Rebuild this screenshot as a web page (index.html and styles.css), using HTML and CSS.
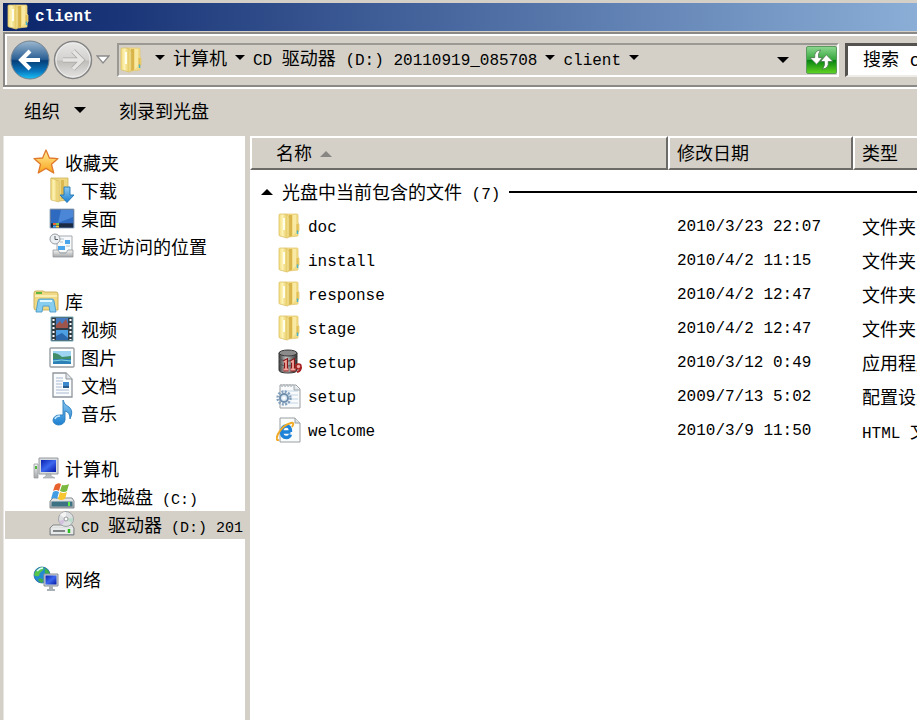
FILE: index.html
```html
<!DOCTYPE html>
<html lang="zh-CN">
<head>
    <meta charset="UTF-8">
    <meta name="viewport" content="width=device-width, initial-scale=1.0">
    <title>client</title>
    <link rel="stylesheet" href="styles.css">
</head>
<body>
    <!-- shared icons and gradients -->
    <svg class="sprite" aria-hidden="true">
        <defs>
            <linearGradient id="gFolder" x1="0" y1="0" x2="1" y2="0">
                <stop offset="0" stop-color="#f3dd7c"/>
                <stop offset=".35" stop-color="#fcf2b4"/>
                <stop offset=".75" stop-color="#e9cf6e"/>
                <stop offset="1" stop-color="#f6e79c"/>
            </linearGradient>
            <linearGradient id="gBlue" x1="0" y1="0" x2="0" y2="1">
                <stop offset="0" stop-color="#8ecbf2"/>
                <stop offset="1" stop-color="#1b7fd0"/>
            </linearGradient>
            <linearGradient id="gScreen" x1="0" y1="0" x2="1" y2="1">
                <stop offset="0" stop-color="#0a1fb0"/>
                <stop offset=".5" stop-color="#3c68ee"/>
                <stop offset="1" stop-color="#0517a6"/>
            </linearGradient>
            <linearGradient id="gStar" x1="0" y1="0" x2="0" y2="1">
                <stop offset="0" stop-color="#fff09a"/>
                <stop offset="1" stop-color="#f9a21b"/>
            </linearGradient>
            <linearGradient id="gMetal" x1="0" y1="0" x2="0" y2="1">
                <stop offset="0" stop-color="#f4f4f4"/>
                <stop offset="1" stop-color="#a4a6a8"/>
            </linearGradient>
            <linearGradient id="gBack" x1="0" y1="0" x2="0" y2="1">
                <stop offset="0" stop-color="#9db8d0"/>
                <stop offset=".48" stop-color="#2a5f94"/>
                <stop offset=".52" stop-color="#063e78"/>
                <stop offset=".8" stop-color="#0a78bf"/>
                <stop offset="1" stop-color="#19c4f8"/>
            </linearGradient>
            <linearGradient id="gForward" x1="0" y1="0" x2="0" y2="1">
                <stop offset="0" stop-color="#e8e8e7"/>
                <stop offset=".5" stop-color="#d2d1cf"/>
                <stop offset=".53" stop-color="#bfbdba"/>
                <stop offset="1" stop-color="#e6e5e3"/>
            </linearGradient>
            <linearGradient id="gDb" x1="0" y1="0" x2="1" y2="0">
                <stop offset="0" stop-color="#3e3e3e"/>
                <stop offset=".4" stop-color="#c4c4c4"/>
                <stop offset="1" stop-color="#303030"/>
            </linearGradient>
        </defs>
        <symbol id="folder" viewBox="0 0 24 26">
            <path d="M8 1h12q1 0 1 1v8l1 1v7l-1 1v4l-9 1z" fill="#f3dc86" stroke="#e3c974" stroke-width=".8"/>
            <path d="M12 2h3v21l-3 1z" fill="#d9b448"/>
            <path d="M16 2h3v17l-3 3z" fill="#f8e9a4"/>
            <path d="M19.500 11h2v8h-2z" fill="#e2bf55"/>
            <path d="M20.500 17.500v3.500" stroke="#45b3c9" stroke-width="1.500"/>
            <path d="M2 2q0-1 1-1h5q4 1 4 4v18q0 2-2 2l-7-2q-1 0-1-1z" fill="url(#gFolder)" stroke="#dcc168" stroke-width=".8"/>
            <path d="M7 5v12" stroke="#fffdec" stroke-width="2"/>
        </symbol>
        <symbol id="star" viewBox="0 0 26 26">
            <path d="M13 1l3.400 8 8.600.6-6.500 5.700 2.200 8.700-7.700-4.600L5.300 24l2.200-8.700L1 9.600 9.600 9z" fill="url(#gStar)" stroke="#e0792b" stroke-width="1.300" stroke-linejoin="round"/>
        </symbol>
        <symbol id="download" viewBox="0 0 26 26">
            <path d="M2 1h17v22l-8 1-9-2z" fill="#efd780" stroke="#cfb258" stroke-width=".8"/>
            <path d="M12 3h3v19h-3z" fill="#dcb950"/>
            <path d="M2 1l8 3v21l-8-2z" fill="url(#gFolder)" stroke="#cfb258" stroke-width=".6"/>
            <path d="M15 10h6v8h4l-7 7.500-7-7.500h4z" fill="url(#gBlue)" stroke="#2076b8" stroke-width=".9"/>
        </symbol>
        <symbol id="desktop" viewBox="0 0 26 26">
            <path d="M1 4h24v19H1z" fill="#2b4f86" stroke="#9db0c4"/>
            <path d="M2 5h22v13H2z" fill="#2e6bc0"/>
            <path d="M12 5h12v7L9 18z" fill="#4c86d6"/>
            <path d="M2 18.500h22v4H2z" fill="#1c2b44"/>
            <path d="M4 18h3v2H4z" fill="#ef6730"/>
            <path d="M7 18h3v2H7z" fill="#7fca4c"/>
            <path d="M4 20.500h3v2H4z" fill="#48a7f0"/>
            <path d="M7 20.500h3v2H7z" fill="#f3cb3d"/>
        </symbol>
        <symbol id="recent" viewBox="0 0 26 26">
            <path d="M8 3h15v17H8z" fill="#f7f9fa" stroke="#a3aab0"/>
            <path d="M11 6h4M11 9h3M17 13h4" stroke="#b6c3ce"/>
            <path d="M16 7h5v4h-5zM9 13h7v4H9z" fill="#4ba5ea"/>
            <circle cx="6" cy="6" r="5" fill="#edf0f2" stroke="#969da3"/>
            <path d="M6 3v3.500h3" fill="none" stroke="#555c63"/>
            <path d="M4 17h5l2 3h6l2-3h5v7H4z" fill="url(#gMetal)" stroke="#92979b" stroke-width=".8"/>
        </symbol>
        <symbol id="library" viewBox="0 0 26 26">
            <path d="M1 5q0-2 2-2h7l2 1h11q2 0 2 2v16H3q-2 0-2-2z" fill="#efd985" stroke="#c8aa50" stroke-width=".9"/>
            <path d="M3 5h6" stroke="#60b63e" stroke-width="2"/>
            <path d="M2 8h22" stroke="#fff5c3" stroke-width="1.500"/>
            <path d="M5 13q0-2 2-2h12q2 0 2 2l2 11h-6l-1-6h-6l-1 6H3z" fill="#86cdf0" stroke="#4999c7" stroke-width=".9"/>
            <path d="M7 13h12" stroke="#e3f7ff" stroke-width="2"/>
        </symbol>
        <symbol id="video" viewBox="0 0 26 26">
            <path d="M2 1h22v24H2z" fill="#303c46" stroke="#77aab8"/>
            <path d="M7 2h12v10H7z" fill="#447ac2"/>
            <path d="M7 9l4-4 2 3 4-5 2 5v4H7z" fill="#9f544c"/>
            <path d="M7 14h12v10H7z" fill="#4d9ee2"/>
            <path d="M7 20l6-3 6 5v2H7z" fill="#2a67ad"/>
            <path d="M4.500 3v21M21.500 3v21" stroke="#fff" stroke-width="2" stroke-dasharray="2 2"/>
        </symbol>
        <symbol id="picture" viewBox="0 0 26 26">
            <rect x="1" y="4" width="24" height="19" rx="1" fill="#fff" stroke="#999ea2" stroke-width="1.400"/>
            <path d="M4 7h18v13H4z" fill="#9cd4f1"/>
            <path d="M4 9q5 0 9 4l9-1v3H4z" fill="#3f8e69"/>
            <path d="M4 15h18v5H4z" fill="#2e81b6"/>
            <path d="M4 17q8-2 18 0" stroke="#87d4e4" fill="none"/>
        </symbol>
        <symbol id="document" viewBox="0 0 26 26">
            <path d="M4 1h13l6 6v18H4z" fill="#fafbfd" stroke="#8f969c" stroke-width="1.300"/>
            <path d="M17 1v6h6" fill="#dfe4e8" stroke="#8f969c"/>
            <path d="M7 6h7M7 9h7M7 12h6M7 15h6M7 18h13M7 21h13" stroke="#a9bad3"/>
            <path d="M14 10h6v6h-6z" fill="#3c86cc"/>
            <path d="M14 14h6v2h-6z" fill="#28598a"/>
        </symbol>
        <symbol id="music" viewBox="0 0 26 26">
            <path d="M14 0q1 5 6 7 5 4 1 12 0-7-5-8v9q-1 5-7 5-5-1-5-5 1-5 7-5h3z" fill="url(#gBlue)" stroke="#2a7dbd" stroke-width=".9"/>
            <path d="M6 19q1-3 5-3" fill="none" stroke="#c7eaff" stroke-width="1.500"/>
        </symbol>
        <symbol id="computer" viewBox="0 0 26 26">
            <path d="M1 9h4v14H1z" fill="url(#gMetal)" stroke="#9b9fa2" stroke-width=".8"/>
            <path d="M3 11v3" stroke="#50b93e" stroke-width="2"/>
            <path d="M6 3h19v16H6z" fill="#d5dade" stroke="#969ba0"/>
            <path d="M8 5h15v12H8z" fill="url(#gScreen)"/>
            <path d="M13 19h5v2l4 2H10l3-2z" fill="#b9bec2" stroke="#989da1" stroke-width=".6"/>
        </symbol>
        <symbol id="disk" viewBox="0 0 26 26">
            <path d="M4 15h19l2 3v7H1v-7z" fill="url(#gMetal)" stroke="#858b90"/>
            <path d="M2.500 18.500h21v5h-21z" fill="#3d7184"/>
            <path d="M20 19v4" stroke="#61ef45" stroke-width="2"/>
            <path d="M6 2q3-3 6-1l-2 7q-3-2-6 0z" fill="#e8622e"/>
            <path d="M13 2q3 1 7-1l-2 7q-3 2-7 0z" fill="#79b93f"/>
            <path d="M4 9q3-2 6 0l-2 7q-3-2-6 0z" fill="#429de5"/>
            <path d="M11 9q3 2 7 0l-2 7q-4 2-7 0z" fill="#f6c530"/>
        </symbol>
        <symbol id="cddrive" viewBox="0 0 26 26">
            <path d="M4 14h19l2 3v7H1v-7z" fill="url(#gMetal)" stroke="#808487"/>
            <circle cx="17" cy="8" r="7.500" fill="#dcdedf" stroke="#a1a5a8"/>
            <path d="M17 8l-6-4q2-3 6-3z" fill="#f4f4f4"/>
            <path d="M17 8l6 4 1-5z" fill="#b9dcc8"/>
            <path d="M17 8l-4 6q-3-2-3-4z" fill="#d3c0df"/>
            <circle cx="17" cy="8" r="2" fill="#fff" stroke="#969a9d"/>
            <path d="M2 17h22v6H2z" fill="#e8e9e9"/>
            <path d="M4 20h12" stroke="#5d6265" stroke-width="1.500"/>
            <path d="M20 18v4" stroke="#2fbe24" stroke-width="2.500"/>
        </symbol>
        <symbol id="network" viewBox="0 0 26 26">
            <circle cx="9" cy="9" r="8" fill="#2389d2" stroke="#2367a1" stroke-width=".8"/>
            <path d="M2 6q4-5 8-5 2 2-1 4t-3 5q-3 1-5-1z" fill="#55c54b"/>
            <path d="M12 2q5 3 5 7h-4q-2-3-1-7zM7 12l4 2-2 3q-3-1-4-3z" fill="#3faf49"/>
            <path d="M4 5q3-3 6-3" stroke="#d9fbff" fill="none" stroke-width="1.500"/>
            <path d="M11 8h14v12H11z" fill="#cdd3d8" stroke="#899097"/>
            <path d="M12.500 9.500h11v9h-11z" fill="url(#gScreen)"/>
            <path d="M16 20h4v3h2v2h-8v-2h2z" fill="#a8b0b6"/>
        </symbol>
        <symbol id="oracle" viewBox="0 0 26 26">
            <path d="M3 4v17q0 3 9 3t9-3V4z" fill="url(#gDb)" stroke="#363636"/>
            <ellipse cx="12" cy="4" rx="9" ry="3" fill="#8b8b8b" stroke="#383838"/>
            <path d="M3 10q9 4 18 0M3 15q9 4 18 0" fill="none" stroke="#555"/>
            <path d="M8 13l2-1v8M7.500 20.500h5M15 13l2-1v8M14.500 20.500h5" fill="none" stroke="#8a1717" stroke-width="4"/>
            <circle cx="22.500" cy="17.500" r="2.500" fill="#f0a9a2" stroke="#a72020" stroke-width="1.600"/>
            <path d="M25 18q0 4-4 5" fill="none" stroke="#a72020" stroke-width="2"/>
            <path d="M8 13l2-1v8M7.500 20.500h5M15 13l2-1v8M14.500 20.500h5" fill="none" stroke="#f3a49c" stroke-width="1.800"/>
        </symbol>
        <symbol id="config" viewBox="0 0 26 26">
            <path d="M4 2h16l4 4v19H4z" fill="#f8fafb" stroke="#999ea2"/>
            <path d="M5 1l1 3 2-3 1 3 2-3 1 3 2-3 1 3 2-3" fill="none" stroke="#b8bdc1"/>
            <path d="M7 8h15M7 12h15M7 16h15M7 20h15" stroke="#c3d6e6"/>
            <path d="M18 2v5h6" fill="#dfe5e9" stroke="#a2a8ac"/>
            <circle cx="8" cy="15" r="6.500" fill="none" stroke="#829fbd" stroke-width="2.400" stroke-dasharray="2 1.400"/>
            <circle cx="8" cy="15" r="4" fill="#dceaf5" stroke="#6e8eac" stroke-width="2"/>
            <circle cx="8" cy="15" r="1.500" fill="#fff"/>
        </symbol>
        <symbol id="html" viewBox="0 0 26 26">
            <path d="M4 1h15l5 5v19H4z" fill="#fafbfb" stroke="#999ea2"/>
            <path d="M19 1v5h5" fill="#dfe4e8" stroke="#999ea2"/>
            <path d="M14.500 15H5.500q.5-6 5-6 4 0 4 6M5.500 14.500q0 6 5 6 3 0 4-3" fill="none" stroke="#1c83d8" stroke-width="3.400"/>
            <path d="M3 23Q-1 24 2 17 7 8 15 6q4-1 1 4" fill="none" stroke="#f0aa27" stroke-width="2"/>
        </symbol>
    </svg>

    <div class="window">
        <header class="titlebar">
            <svg class="icon"><use href="#folder"/></svg>
            <h1>client</h1>
        </header>

        <div class="navbar">
            <div class="nav-buttons">
                <button type="button" class="round" aria-label="后退">
                    <svg viewBox="0 0 40 40">
                        <circle cx="20" cy="20" r="19" fill="url(#gBack)" stroke="#74818d"/>
                        <path d="M20 11l-9 9 9 9M12 20h18" fill="none" stroke="#fff" stroke-width="4"/>
                    </svg>
                </button>
                <button type="button" class="round" aria-label="前进">
                    <svg viewBox="0 0 40 40">
                        <circle cx="20" cy="20" r="18.500" fill="url(#gForward)" stroke="#858585" stroke-width="1.500"/>
                        <circle cx="20" cy="20" r="17" fill="none" stroke="#efefee"/>
                        <path d="M20 11l9 9-9 9M28 20H10" fill="none" stroke="#aaa8a5" stroke-width="5"/>
                        <path d="M20 11l9 9-9 9M28 20H10" fill="none" stroke="#e6e5e3" stroke-width="3.500"/>
                    </svg>
                </button>
                <button type="button" class="history" aria-label="最近浏览的位置">
                    <svg viewBox="0 0 14 10"><path d="M1 1h12L7 8z" fill="#fff" stroke="#8b8b8b" stroke-width="1.300"/></svg>
                </button>
            </div>
            <div class="address">
                <svg class="icon"><use href="#folder"/></svg>
                <nav class="crumbs">
                    <i class="arrow"></i>
                    <a href="#">计算机</a>
                    <i class="arrow"></i>
                    <a href="#"><span class="latin">CD </span>驱动器<span class="latin"> (D:) 20110919_085708</span></a>
                    <i class="arrow"></i>
                    <a href="#"><span class="latin">client</span></a>
                    <i class="arrow"></i>
                </nav>
                <button type="button" class="drop" aria-label="以前的位置"><i class="arrow large"></i></button>
                <button type="button" class="refresh" aria-label="刷新">
                    <svg viewBox="0 0 26 22">
                        <path d="M12 1Q5 2 6 9H1l7 7 6-7h-4q-1-4 2-8zM14 21q7-1 6-8h5l-7-7-6 7h4q1 4-2 8z" fill="#fff" stroke="#46734a" stroke-width=".8"/>
                    </svg>
                </button>
            </div>
            <input type="text" class="search" placeholder="搜索 client" aria-label="搜索 client">
        </div>

        <div class="toolbar">
            <button type="button">组织 <i class="arrow large"></i></button>
            <button type="button">刻录到光盘</button>
        </div>

        <div class="content">
            <aside class="sidebar">
                <ul>
                    <li><a href="#"><svg class="icon"><use href="#star"/></svg>收藏夹</a></li>
                    <li class="child"><a href="#"><svg class="icon"><use href="#download"/></svg>下载</a></li>
                    <li class="child"><a href="#"><svg class="icon"><use href="#desktop"/></svg>桌面</a></li>
                    <li class="child"><a href="#"><svg class="icon"><use href="#recent"/></svg>最近访问的位置</a></li>
                </ul>
                <ul>
                    <li><a href="#"><svg class="icon"><use href="#library"/></svg>库</a></li>
                    <li class="child"><a href="#"><svg class="icon"><use href="#video"/></svg>视频</a></li>
                    <li class="child"><a href="#"><svg class="icon"><use href="#picture"/></svg>图片</a></li>
                    <li class="child"><a href="#"><svg class="icon"><use href="#document"/></svg>文档</a></li>
                    <li class="child"><a href="#"><svg class="icon"><use href="#music"/></svg>音乐</a></li>
                </ul>
                <ul>
                    <li><a href="#"><svg class="icon"><use href="#computer"/></svg>计算机</a></li>
                    <li class="child"><a href="#"><svg class="icon"><use href="#disk"/></svg><span>本地磁盘<span class="latin"> (C:)</span></span></a></li>
                    <li class="child selected"><a href="#"><svg class="icon"><use href="#cddrive"/></svg><span><span class="latin">CD </span>驱动器<span class="latin"> (D:) 201</span></span></a></li>
                </ul>
                <ul>
                    <li><a href="#"><svg class="icon"><use href="#network"/></svg>网络</a></li>
                </ul>
            </aside>

            <main class="files">
                <table>
                    <colgroup>
                        <col class="col-name">
                        <col class="col-date">
                        <col>
                    </colgroup>
                    <thead>
                        <tr>
                            <th class="name">名称 <i class="sort"></i></th>
                            <th>修改日期</th>
                            <th>类型</th>
                        </tr>
                    </thead>
                    <tbody>
                        <tr class="group">
                            <td colspan="3">
                                <div class="group-line"><i class="sort"></i><span>光盘中当前包含的文件<span class="latin"> (7)</span></span></div>
                            </td>
                        </tr>
                        <tr>
                            <td class="name"><div><svg class="icon"><use href="#folder"/></svg><span class="latin">doc</span></div></td>
                            <td class="latin">2010/3/23 22:07</td>
                            <td>文件夹</td>
                        </tr>
                        <tr>
                            <td class="name"><div><svg class="icon"><use href="#folder"/></svg><span class="latin">install</span></div></td>
                            <td class="latin">2010/4/2 11:15</td>
                            <td>文件夹</td>
                        </tr>
                        <tr>
                            <td class="name"><div><svg class="icon"><use href="#folder"/></svg><span class="latin">response</span></div></td>
                            <td class="latin">2010/4/2 12:47</td>
                            <td>文件夹</td>
                        </tr>
                        <tr>
                            <td class="name"><div><svg class="icon"><use href="#folder"/></svg><span class="latin">stage</span></div></td>
                            <td class="latin">2010/4/2 12:47</td>
                            <td>文件夹</td>
                        </tr>
                        <tr>
                            <td class="name"><div><svg class="icon"><use href="#oracle"/></svg><span class="latin">setup</span></div></td>
                            <td class="latin">2010/3/12 0:49</td>
                            <td>应用程序</td>
                        </tr>
                        <tr>
                            <td class="name"><div><svg class="icon"><use href="#config"/></svg><span class="latin">setup</span></div></td>
                            <td class="latin">2009/7/13 5:02</td>
                            <td>配置设置</td>
                        </tr>
                        <tr>
                            <td class="name"><div><svg class="icon"><use href="#html"/></svg><span class="latin">welcome</span></div></td>
                            <td class="latin">2010/3/9 11:50</td>
                            <td><span class="latin">HTML </span>文档</td>
                        </tr>
                    </tbody>
                </table>
            </main>
        </div>
    </div>
</body>
</html>
```
FILE: styles.css
```css
* {
    box-sizing: border-box;
}

body {
    margin: 0;
    background-color: #d4d0c8;
    color: black;
    font-family: "Noto Sans CJK SC", sans-serif;
    font-size: 18px;
    line-height: 26px;
    overflow: hidden;
}

button {
    border: none;
    padding: 0;
    background: none;
    font: inherit;
    color: inherit;
}

a {
    color: inherit;
    text-decoration: none;
}

ul {
    list-style: none;
    margin: 0;
    padding: 0;
}

.sprite {
    position: absolute;
    width: 0;
    height: 0;
}

.icon {
    width: 26px;
    height: 26px;
    flex: none;
}

.latin {
    font-family: "Liberation Mono", monospace;
    font-size: 16px;
    line-height: 16px;
    white-space: pre;
}

.arrow {
    display: inline-block;
    border: 5px solid transparent;
    border-top-color: black;
    border-bottom: none;
}

.arrow.large {
    border-width: 6px;
    border-bottom: none;
}

.sort {
    display: inline-block;
    border: 6px solid transparent;
    border-bottom-color: black;
    border-top: none;
}

.window {
    display: flex;
    flex-direction: column;
    min-height: 100vh;
    padding: 3px 0 0 3px;
}

/* title bar */
.titlebar {
    display: flex;
    align-items: center;
    gap: 4px;
    height: 28px;
    padding-left: 2px;
    background: linear-gradient(to right, #0a246a, #8aaed6);
    color: white;
}

.titlebar h1 {
    margin: 0;
    font-family: "Liberation Mono", monospace;
    font-size: 16px;
    font-weight: bold;
}

/* address bar */
.navbar {
    display: flex;
    align-items: center;
    height: 55px;
    margin-top: 1px;
    padding-left: 5px;
    border: 2px solid #8a8985;
    border-right: none;
    box-shadow: inset 2px 2px white, 0 2px white;
}

.nav-buttons {
    display: flex;
    align-items: center;
    width: 107px;
}

.round {
    width: 40px;
    height: 40px;
    border-radius: 50%;
}

.round + .round {
    margin-left: 3px;
}

.round svg,
.history svg,
.refresh svg {
    display: block;
    width: 100%;
}

.history {
    width: 14px;
    margin-left: 3px;
}

.address {
    flex: 1;
    display: flex;
    align-items: center;
    height: 34px;
    border: 2px solid white;
    border-top-color: #9a9994;
    border-left-color: #9a9994;
}

.address .icon {
    width: 24px;
}

.crumbs {
    flex: 1;
    display: flex;
    align-items: center;
    gap: 8px;
    padding: 0 0 4px 12px;
    white-space: nowrap;
}

.crumbs a {
    padding-bottom: 2px;
}

.drop {
    display: flex;
    margin-right: 17px;
}

.refresh {
    width: 31px;
    height: 28px;
    padding: 0 2px;
    border: 1px solid #5a9a5d;
    border-radius: 2px;
    background: linear-gradient(#8bd58e, #35a83c 48%, #078312 52%, #5fd122);
}

.search {
    width: 72px;
    height: 34px;
    margin-left: 6px;
    padding: 2px 0 0 15px;
    border: 2px solid #55534f;
    border-width: 3px 0 2px 3px;
    border-bottom-color: #eeece8;
    border-radius: 0;
    background: white;
    font-family: "Liberation Mono", "Noto Sans CJK SC", monospace;
    font-size: 18px;
}

.search::placeholder {
    color: black;
    opacity: 1;
}

/* command bar */
.toolbar {
    display: flex;
    align-items: center;
    gap: 33px;
    height: 49px;
    padding: 0 0 4px 21px;
}

.toolbar button {
    display: flex;
    align-items: center;
    gap: 14px;
}

/* navigation pane */
.content {
    flex: 1;
    display: flex;
}

.sidebar {
    flex: none;
    width: 242px;
    padding-top: 13px;
    border-left: 1px solid #e8e6e2;
    background: white;
    overflow: hidden;
}

.sidebar ul {
    margin-bottom: 27px;
}

.sidebar li {
    height: 28px;
    margin-left: 1px;
    padding-left: 28px;
    white-space: nowrap;
}

.sidebar .child {
    padding-left: 44px;
}

.sidebar a {
    display: flex;
    align-items: center;
    gap: 6px;
}

.sidebar .latin {
    font-size: 15px;
}

.selected {
    background-color: #d4d0c8;
}

/* file list */
.files {
    flex: 1;
    min-width: 0;
    margin-left: 5px;
    background: white;
}

table {
    width: 100%;
    table-layout: fixed;
    border-collapse: separate;
    border-spacing: 0;
}

.col-name {
    width: 418px;
}

.col-date {
    width: 185px;
}

th,
td {
    height: 34px;
    padding: 0 0 2px 9px;
    text-align: left;
    font-weight: normal;
    white-space: nowrap;
    overflow: hidden;
}

th {
    border: 2px solid #6d6b68;
    border-top-color: white;
    border-left-color: white;
    background-color: #d4d0c8;
    padding-left: 7px;
}

th:last-child {
    border-right: none;
}

th.name {
    padding-left: 24px;
}

th .sort {
    margin: 0 0 3px 4px;
    border-bottom-color: #878683;
}

td.latin {
    padding-bottom: 0;
}

td.name {
    padding-left: 26px;
}

td.name div {
    display: flex;
    align-items: center;
    gap: 6px;
}

td.name .latin {
    padding-top: 4px;
}

.group td {
    height: 40px;
    padding: 4px 0 0 11px;
}

.group-line {
    display: flex;
    align-items: center;
    gap: 9px;
}

.group-line span {
    padding-bottom: 2px;
}

.group-line::after {
    content: "";
    flex: 1;
    height: 2px;
    background: black;
}
```
